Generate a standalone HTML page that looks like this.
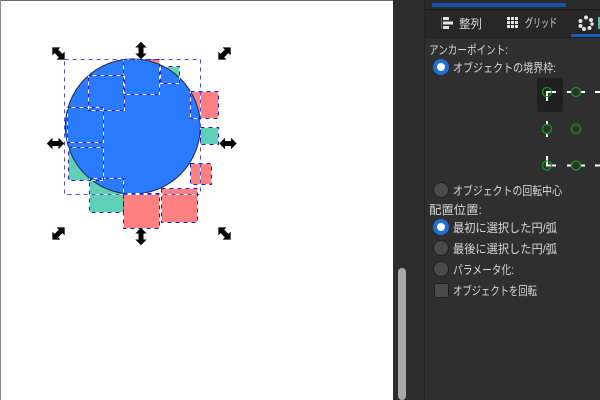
<!DOCTYPE html>
<html><head><meta charset="utf-8">
<style>
html,body{margin:0;padding:0;width:600px;height:400px;overflow:hidden;background:#2f2f2f}
svg{position:absolute;left:0;top:0}
.t{font-family:"Liberation Sans","Noto Sans CJK JP",sans-serif;font-size:12px;fill:#d8d8d8}
</style></head><body>
<svg width="600" height="400" viewBox="0 0 600 400" xmlns="http://www.w3.org/2000/svg">
<defs>
<path id="ar" d="M-8 0L-3.500-4.500V-2H3.500V-4.500L8 0L3.500 4.500V2H-3.500V4.500Z" fill="#000" stroke="#000" stroke-width="1"/>
</defs>
<!-- canvas -->
<rect x="0" y="0" width="393" height="400" fill="#fff"/>
<rect x="0" y="0" width="393" height="1" fill="#6a6a6a"/>
<rect x="0" y="0" width="1" height="400" fill="#8a8a8a"/>
<!-- objects -->
<g stroke="#444" stroke-width="1">
<rect x="123.500" y="59.500" width="36" height="35" fill="#ff8080"/>
<rect x="160.500" y="66.500" width="19" height="17" fill="#5fd0b5"/>
<rect x="190.500" y="91.500" width="28" height="27" fill="#ff8080"/>
<rect x="200.500" y="127.500" width="18" height="17" fill="#5fd0b5"/>
<rect x="190.500" y="163.500" width="21" height="21" fill="#ff8080"/>
<rect x="161.500" y="188.500" width="36" height="34" fill="#ff8080"/>
<rect x="123.500" y="193.500" width="36" height="35" fill="#ff8080"/>
<rect x="89.500" y="178.500" width="34" height="34" fill="#5fd0b5"/>
<rect x="68.500" y="147.500" width="35" height="33" fill="#5fd0b5"/>
</g>
<circle cx="132.800" cy="126.500" r="67.500" fill="#2a7bff" stroke="#1d2d45" stroke-width="1"/>
<!-- selection cues -->
<g fill="none" stroke-width="1">
<g stroke="#fff">
<rect x="64.500" y="59.500" width="136" height="135"/>
<rect x="123.500" y="59.500" width="36" height="35"/>
<rect x="160.500" y="66.500" width="19" height="17"/>
<rect x="190.500" y="91.500" width="28" height="27"/>
<rect x="200.500" y="127.500" width="18" height="17"/>
<rect x="190.500" y="163.500" width="21" height="21"/>
<rect x="161.500" y="188.500" width="36" height="34"/>
<rect x="123.500" y="193.500" width="36" height="35"/>
<rect x="89.500" y="178.500" width="34" height="34"/>
<rect x="68.500" y="147.500" width="35" height="33"/>
<rect x="67.500" y="107.500" width="36" height="35"/>
<rect x="88.500" y="75.500" width="36" height="35"/>
</g>
<g stroke="#1c1ccc" stroke-dasharray="4 4">
<rect x="64.500" y="59.500" width="136" height="135" stroke="#5544dd"/>
<rect x="123.500" y="59.500" width="36" height="35"/>
<rect x="160.500" y="66.500" width="19" height="17"/>
<rect x="190.500" y="91.500" width="28" height="27"/>
<rect x="200.500" y="127.500" width="18" height="17"/>
<rect x="190.500" y="163.500" width="21" height="21"/>
<rect x="161.500" y="188.500" width="36" height="34"/>
<rect x="123.500" y="193.500" width="36" height="35"/>
<rect x="89.500" y="178.500" width="34" height="34"/>
<rect x="68.500" y="147.500" width="35" height="33"/>
<rect x="67.500" y="107.500" width="36" height="35"/>
<rect x="88.500" y="75.500" width="36" height="35"/>
</g>
</g>
<!-- handles -->
<use href="#ar" transform="translate(58.500 53.500) rotate(45)"/>
<use href="#ar" transform="translate(141 50.500) rotate(90)"/>
<use href="#ar" transform="translate(224.500 53.500) rotate(-45)"/>
<use href="#ar" transform="translate(55.500 143.500)"/>
<use href="#ar" transform="translate(228 143.500)"/>
<use href="#ar" transform="translate(58.500 233.500) rotate(-45)"/>
<use href="#ar" transform="translate(141 236.500) rotate(90)"/>
<use href="#ar" transform="translate(224.500 233.500) rotate(45)"/>
<!-- right panel -->
<rect x="393" y="0" width="207" height="400" fill="#2f2f2f"/>
<rect x="393" y="0" width="31" height="400" fill="#2d2d2d"/>
<rect x="424" y="0" width="1" height="400" fill="#222"/>
<rect x="425" y="0" width="175" height="9" fill="#2a2a2a"/>
<rect x="432" y="3" width="134" height="4" fill="#1a52a8"/>
<rect x="425" y="9" width="175" height="1" fill="#1c1c1c"/>
<rect x="425" y="10" width="175" height="27" fill="#272727"/>
<rect x="425" y="37" width="175" height="1" fill="#1e1e1e"/>
<rect x="571" y="34" width="29" height="3" fill="#1a5cc0"/>
<!-- scrollbar -->
<rect x="398" y="268" width="8" height="132" rx="4" fill="#a8a8a8"/>
<!-- tab icons -->
<g fill="#e4e4e4">
<rect x="441" y="17" width="1" height="12" fill="#2c8a4a"/>
<rect x="443" y="17" width="6" height="3"/><rect x="443" y="21.500" width="10" height="3"/><rect x="443" y="26" width="6" height="3"/>
<rect x="507" y="17" width="3" height="3"/><rect x="511" y="17" width="3" height="3"/><rect x="515" y="17" width="3" height="3"/>
<rect x="507" y="21" width="3" height="3"/><rect x="511" y="21" width="3" height="3"/><rect x="515" y="21" width="3" height="3"/>
<rect x="507" y="25" width="3" height="3"/><rect x="511" y="25" width="3" height="3"/><rect x="515" y="25" width="3" height="3"/>
<circle cx="586" cy="17.500" r="2"/><circle cx="591" cy="20" r="2"/><circle cx="592" cy="24" r="1.800"/><circle cx="589.500" cy="28" r="2"/><circle cx="584" cy="29" r="2"/><circle cx="580.500" cy="26" r="2"/><circle cx="580.500" cy="21" r="2"/>
</g>
<rect x="598" y="17" width="2" height="12" fill="#5fb5a5"/>
<text class="t" x="459" y="28" style="font-size:12px" textLength="23" lengthAdjust="spacingAndGlyphs">整列</text>
<text class="t" x="525" y="27" style="font-size:12px" textLength="32" lengthAdjust="spacingAndGlyphs">グリッド</text>
<!-- labels -->
<text class="t" x="429" y="54" textLength="79" lengthAdjust="spacingAndGlyphs">アンカーポイント:</text>
<text class="t" x="453" y="72" textLength="103" lengthAdjust="spacingAndGlyphs">オブジェクトの境界枠:</text>
<text class="t" x="453" y="195" textLength="109" lengthAdjust="spacingAndGlyphs">オブジェクトの回転中心</text>
<text class="t" x="429" y="214" textLength="53" lengthAdjust="spacingAndGlyphs">配置位置:</text>
<text class="t" x="453" y="232" textLength="104" lengthAdjust="spacingAndGlyphs">最初に選択した円/弧</text>
<text class="t" x="453" y="253" textLength="104" lengthAdjust="spacingAndGlyphs">最後に選択した円/弧</text>
<text class="t" x="453" y="274" textLength="61" lengthAdjust="spacingAndGlyphs">パラメータ化:</text>
<text class="t" x="453" y="295" textLength="84" lengthAdjust="spacingAndGlyphs">オブジェクトを回転</text>
<!-- radios -->
<circle cx="441" cy="67" r="8" fill="#1e6fd9"/><circle cx="441" cy="67" r="4" fill="#fff"/>
<circle cx="441" cy="190" r="7.500" fill="#4a4a4a" stroke="#1f1f1f"/>
<circle cx="441" cy="227" r="8" fill="#1e6fd9"/><circle cx="441" cy="227" r="4" fill="#fff"/>
<circle cx="441" cy="248" r="7.500" fill="#4a4a4a" stroke="#1f1f1f"/>
<circle cx="441" cy="269" r="7.500" fill="#4a4a4a" stroke="#1f1f1f"/>
<rect x="434.500" y="283.500" width="14" height="14" rx="1.500" fill="#4a4a4a" stroke="#1f1f1f"/>
<!-- anchor grid -->
<rect x="537" y="78" width="26" height="34" rx="3" fill="#202020"/>
<g stroke="#fff" stroke-width="2" fill="none">
<path d="M556 92H547V101"/>
<path d="M567 92H585"/>
<path d="M595 92H600"/>
<path d="M547 121V137"/>
<path d="M547 156V165.500H556"/>
<path d="M567 165.500H585"/>
<path d="M595 165.500H600"/>
</g>
<g fill="#2f2f2f" stroke="#0c9a1a" stroke-width="1.300">
<circle cx="576" cy="92" r="4.500"/>
<circle cx="547" cy="129" r="4.500"/>
<circle cx="576" cy="165.500" r="4.500"/>
</g>
<circle cx="547" cy="92" r="4.500" fill="none" stroke="#0c9a1a" stroke-width="1.300"/>
<circle cx="547" cy="165.500" r="4.500" fill="none" stroke="#0c9a1a" stroke-width="1.300"/>
<circle cx="576" cy="129" r="4.500" fill="none" stroke="#2c6b30" stroke-width="2"/>
</svg>
</body></html>
